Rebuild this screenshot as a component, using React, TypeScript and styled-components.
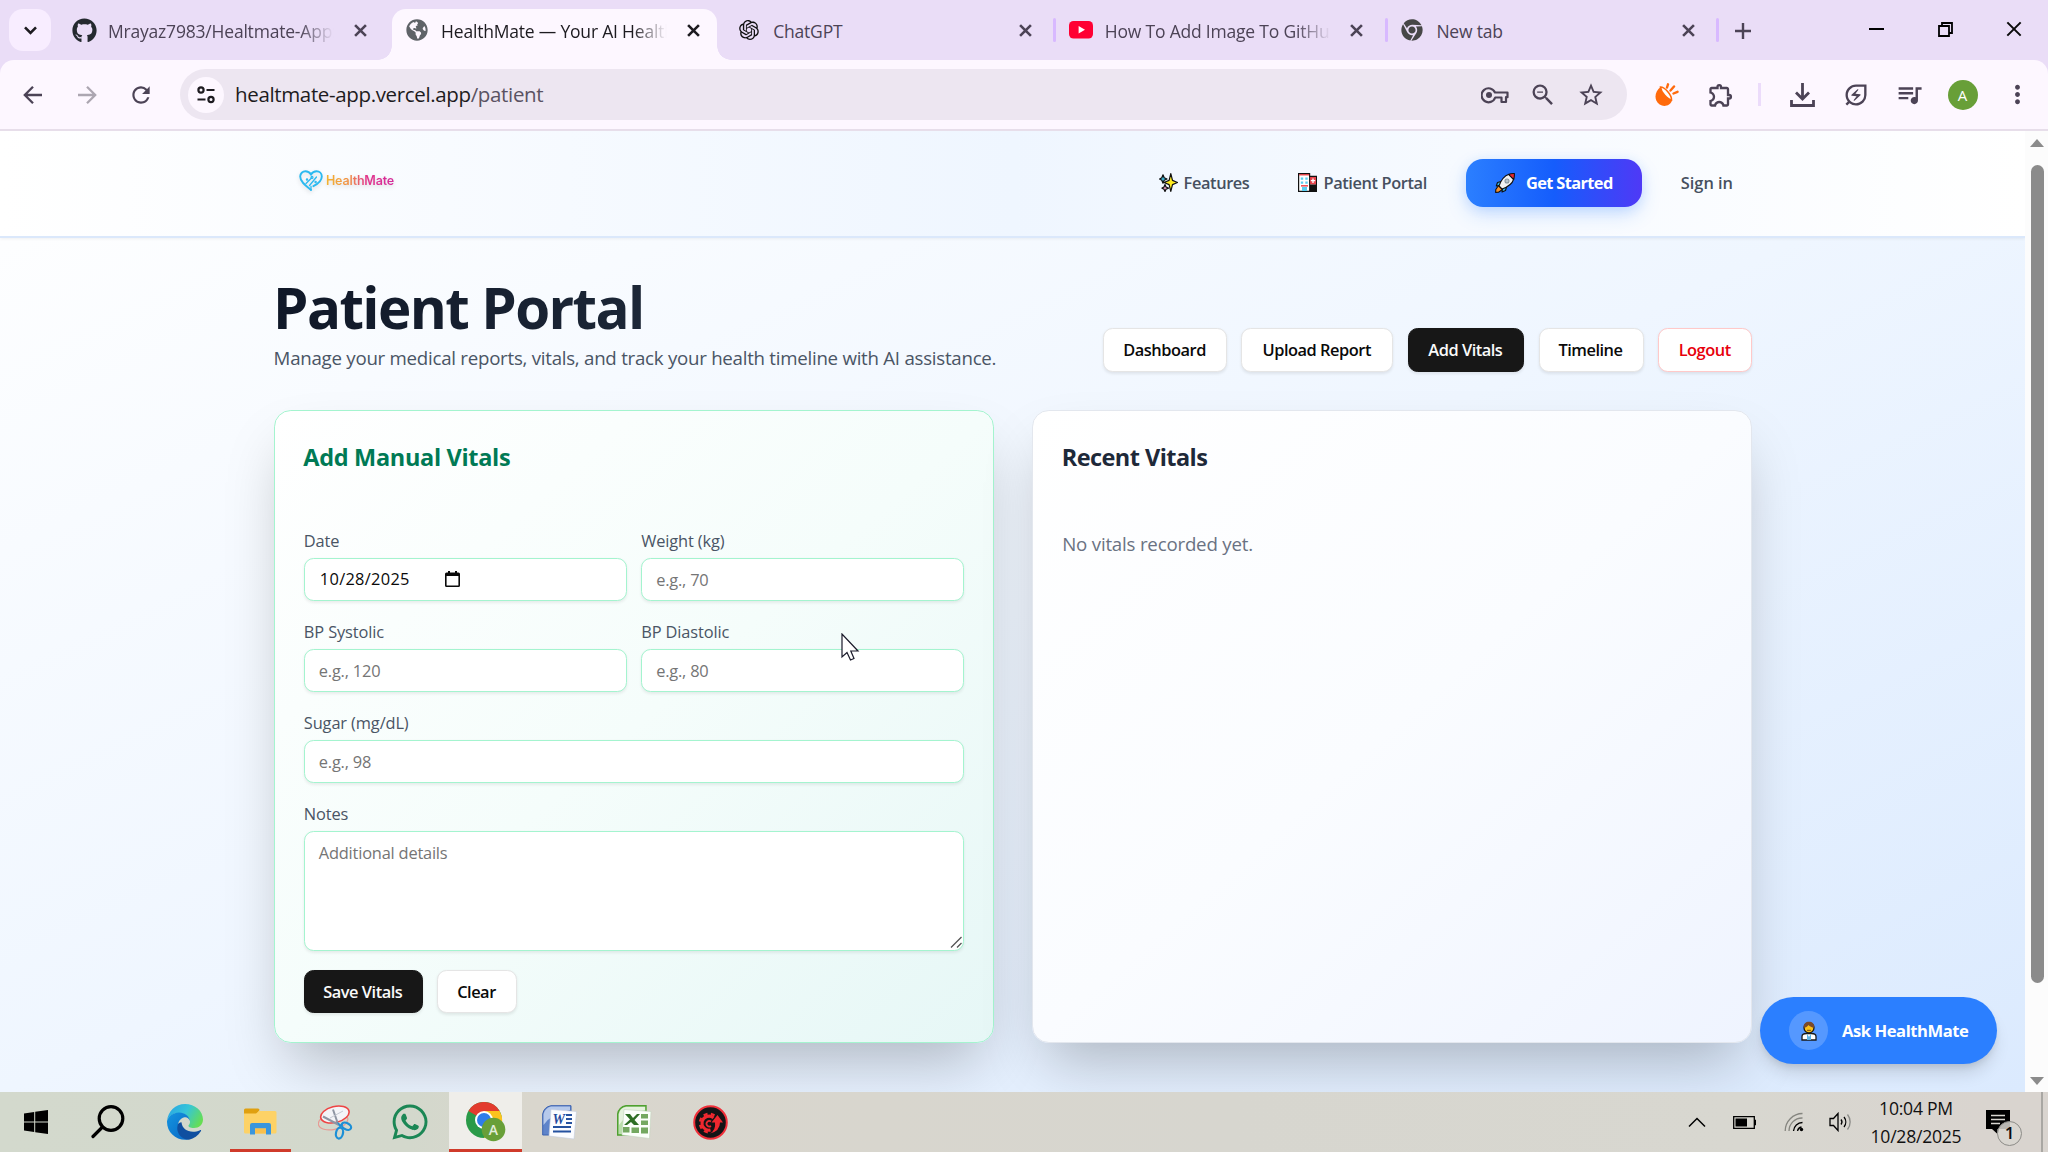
import React from "react";
import styled, { createGlobalStyle, css } from "styled-components";
import { FaGithub, FaWhatsapp, FaChrome, FaGlobeAmericas } from "react-icons/fa";
import { RiOpenaiFill } from "react-icons/ri";
import {
  MdZoomOut,
  MdStarBorder,
  MdOutlineExtension,
  MdQueueMusic,
  MdOutlineEnergySavingsLeaf,
  MdMoreVert,
  MdRefresh,
} from "react-icons/md";

const GlobalStyle = createGlobalStyle`
  *, *::before, *::after { box-sizing: border-box; }
  body {
    margin: 0;
    overflow: hidden;
    font-family: "Open Sans", "Noto Sans", sans-serif;
    color: #0a0a0a;
  }
  svg { display: block; flex: none; }
`;

const Screen = styled.div`
  width: 2048px;
  height: 1152px;
  display: flex;
  flex-direction: column;
  overflow: hidden;
`;

/* ---------- browser chrome ---------- */

const TabStrip = styled.div`
  height: 60px;
  flex: none;
  display: flex;
  background: #eaddf7;
  padding-left: 9px;
`;

const TabSearch = styled.div`
  width: 42px;
  height: 42px;
  margin: 9px 11px 0 0;
  border-radius: 14px;
  background: #f8edff;
  display: grid;
  place-items: center;
`;

const Tab = styled.div<{ $active?: boolean }>`
  position: relative;
  width: ${(p) => (p.$active ? 324.5 : 331.6)}px;
  height: 51px;
  margin: 9px ${(p) => (p.$active ? 10.6 : 0)}px 0 ${(p) => (p.$active ? -1.5 : 0)}px;
  padding-left: ${(p) => (p.$active ? 13 : 10)}px;
  padding-bottom: 9px;
  display: flex;
  align-items: center;
  color: ${(p) => (p.$active ? "#1d1b20" : "#4c4356")};
  ${(p) =>
    p.$active &&
    css`
      background: #fdf7ff;
      border-radius: 14px 14px 0 0;
      &::before,
      &::after {
        content: "";
        position: absolute;
        bottom: 0;
        width: 14px;
        height: 14px;
      }
      &::before {
        left: -14px;
        background: radial-gradient(circle at 0 0, transparent 13.5px, #fdf7ff 14px);
      }
      &::after {
        right: -14px;
        background: radial-gradient(circle at 100% 0, transparent 13.5px, #fdf7ff 14px);
      }
    `}
`;

const TabIcon = styled.span`
  width: 24px;
  margin-right: 12px;
  display: grid;
  place-items: center;
`;

const TabTitle = styled.span<{ $fade?: boolean }>`
  width: 228px;
  overflow: hidden;
  white-space: nowrap;
  font-size: 17.5px;
  line-height: 28px;
  padding-top: 1px;
  letter-spacing: -0.2px;
  ${(p) => p.$fade && "mask-image: linear-gradient(90deg, #000 84%, transparent 99%);"}
`;

const TabClose = styled.span`
  width: 16px;
  margin-left: 17.5px;
`;

const TabDivider = styled.span`
  width: 3px;
  height: 24px;
  border-radius: 2px;
  margin-left: 18.5px;
  background: #d8b9ff;
`;

const NewTab = styled.div`
  width: 44px;
  height: 56px;
  margin: 2px auto 0 -1px;
  padding-top: 2px;
  display: grid;
  place-items: center;
`;

const WindowControl = styled.div`
  width: 68.5px;
  height: 58px;
  display: grid;
  place-items: center;
`;

const ToolbarBack = styled.div`
  flex: none;
  background: #eaddf7;
`;

const Toolbar = styled.div`
  height: 71px;
  background: #fdf7ff;
  border-radius: 14px 14px 0 0;
  border-bottom: 2px solid #e7deea;
  display: flex;
  align-items: center;
  color: #4c4356;
`;

const ToolButton = styled.div<{ $w: number; $color?: string }>`
  width: ${(p) => p.$w}px;
  display: grid;
  place-items: center;
  color: ${(p) => p.$color ?? "inherit"};
`;

const AddressBar = styled.div`
  width: 1447px;
  height: 51px;
  margin: 0 13px 0 6px;
  padding: 0 12px 0 8px;
  border-radius: 26px;
  background: #ede6f1;
  display: flex;
  align-items: center;
`;

const SiteInfo = styled.div`
  width: 36px;
  height: 36px;
  border-radius: 50%;
  background: #fdf7ff;
  display: grid;
  place-items: center;
`;

const Url = styled.div`
  margin: -1px auto 0 11px;
  font-size: 20.5px;
  line-height: 30px;
  letter-spacing: -0.35px;
  color: #1d1b20;
  white-space: nowrap;
  span { color: #5a5262; }
`;

const ToolDivider = styled.span`
  width: 3px;
  height: 23px;
  margin: 0 14px 0 10px;
  background: #ecdcfb;
`;

const Avatar = styled.div`
  width: 30px;
  height: 30px;
  border-radius: 50%;
  background: #689f38;
  color: #fff;
  font-size: 15px;
  line-height: 30px;
  text-align: center;
`;

/* ---------- page ---------- */

const Viewport = styled.div`
  flex: 1;
  min-height: 0;
  display: flex;
`;

const Page = styled.div`
  flex: 1;
  display: flex;
  flex-direction: column;
  position: relative;
  overflow: hidden;
  background: linear-gradient(to bottom right, #ffffff, #eff6ff 50%, #dbeafe);
`;

const Scrollbar = styled.div`
  width: 23px;
  display: flex;
  flex-direction: column;
  align-items: center;
  padding: 8px 0 7px 1px;
  background: #fcfcfc;
`;

const Thumb = styled.div`
  width: 13px;
  height: 818px;
  margin: 18px 0 auto;
  border-radius: 7px;
  background: #8b8b8b;
`;

const Arrow = styled.div<{ $down?: boolean }>`
  border: 7.5px solid transparent;
  border-top-width: ${(p) => (p.$down ? 8 : 0)}px;
  border-bottom-width: ${(p) => (p.$down ? 0 : 8)}px;
  ${(p) => (p.$down ? "border-top-color" : "border-bottom-color")}: #8b8b8b;
`;

const SiteHeader = styled.header`
  height: 107px;
  flex: none;
  border-bottom: 2px solid #dbe8fb;
  background: linear-gradient(90deg, #ffffff, #eff6ff 50%, #ffffff);
  box-shadow: 0 1px 3px rgba(0, 0, 0, 0.06);
  display: flex;
  align-items: center;
  padding: 0 292px 2px 299px;
`;

const Logo = styled.div`
  display: flex;
  align-items: center;
  gap: 3px;
  margin: -4px auto 0 0;
  filter: drop-shadow(0 2px 2px rgba(0, 0, 0, 0.12));
`;

const LogoText = styled.span`
  font-family: Inter, "Open Sans", sans-serif;
  font-weight: 600;
  font-size: 12.5px;
  line-height: 18px;
  letter-spacing: -0.2px;
  background: linear-gradient(90deg, #f3b42f, #f0904a 35%, #e2358c 60%, #d42a9b);
  background-clip: text;
  color: transparent;
`;

const NavLink = styled.a<{ $mr: number; $ls?: number }>`
  display: flex;
  align-items: center;
  gap: 6px;
  margin-right: ${(p) => p.$mr}px;
  font-size: 16.4px;
  line-height: 24px;
  font-weight: 600;
  letter-spacing: ${(p) => p.$ls ?? -0.4}px;
  color: #465060;
  white-space: nowrap;
`;

const GetStarted = styled.button`
  width: 176px;
  height: 48px;
  margin-right: 39px;
  padding: 0;
  border: 0;
  border-radius: 17px;
  display: flex;
  align-items: center;
  justify-content: center;
  gap: 11px;
  font: 700 16.4px/24px "Open Sans", sans-serif;
  letter-spacing: -0.62px;
  color: #fff;
  white-space: nowrap;
  background: linear-gradient(90deg, #2b7fff, #155dfc 50%, #4f39f6);
  box-shadow: 0 8px 20px -2px rgba(43, 127, 255, 0.25), 0 2px 12px rgba(43, 127, 255, 0.12);
`;

const Main = styled.main`
  width: 1478.4px;
  margin-left: 274px;
  padding-top: 39px;
`;

const Heading = styled.div`
  display: flex;
  justify-content: space-between;
  align-items: flex-end;
  height: 95px;
`;

const H1 = styled.h1`
  margin: 0 0 0 -1px;
  font-size: 56.5px;
  line-height: 62px;
  font-weight: 700;
  letter-spacing: -1.6px;
  white-space: nowrap;
  background: linear-gradient(90deg, #101828, #1e2939 60%);
  background-clip: text;
  color: transparent;
`;

const Lead = styled.p`
  margin: 4px 0 0 -0.4px;
  font-size: 18.7px;
  line-height: 29px;
  letter-spacing: -0.26px;
  color: #4a5565;
  white-space: nowrap;
`;

const Actions = styled.div`
  display: flex;
  gap: 14.4px;
`;

type Variant = "light" | "dark" | "danger";

const Button = styled.button<{ $w: number; $variant?: Variant }>`
  width: ${(p) => p.$w}px;
  height: 43.8px;
  padding: 0 1px 0 0;
  border-radius: 9.6px;
  border: 1.2px solid
    ${(p) => (p.$variant === "dark" ? "#171717" : p.$variant === "danger" ? "#ffc9c9" : "#e5e5e5")};
  background: ${(p) => (p.$variant === "dark" ? "#171717" : "#fff")};
  color: ${(p) => (p.$variant === "dark" ? "#fafafa" : p.$variant === "danger" ? "#e7000b" : "#0a0a0a")};
  box-shadow: 0 1.5px 3px rgba(0, 0, 0, 0.08);
  font: 600 16.4px/24px "Open Sans", sans-serif;
  letter-spacing: -0.48px;
  white-space: nowrap;
`;

const Cards = styled.div`
  margin-top: 38px;
  display: grid;
  grid-template-columns: 1fr 1fr;
  gap: 38.4px;
`;

const Card = styled.section<{ $green?: boolean }>`
  height: 633px;
  padding: 31px 28.8px 0;
  border-radius: 16.8px;
  border: 1.2px solid ${(p) => (p.$green ? "#a4f4cf" : "#e3e7ee")};
  background: ${(p) =>
    p.$green
      ? "linear-gradient(to bottom right, #ffffff, #f5fdfb 50%, #e6f7f6)"
      : "linear-gradient(to bottom right, #ffffff, #fafcff 50%, #eff4ff)"};
  box-shadow: 0 30px 60px -14.4px rgba(0, 0, 0, 0.25);
`;

const CardTitle = styled.h2<{ $green?: boolean }>`
  margin: 0 0 0 -0.5px;
  font-size: 23.5px;
  line-height: 30px;
  font-weight: 700;
  letter-spacing: ${(p) => (p.$green ? -0.32 : -0.55)}px;
  color: ${(p) => (p.$green ? "#007a55" : "#1e2939")};
  white-space: nowrap;
`;

const Empty = styled.p`
  margin: 57px 0 0;
  font-size: 18.7px;
  line-height: 29px;
  letter-spacing: -0.2px;
  color: #6a7282;
`;

const Form = styled.div`
  margin-top: 57px;
  display: grid;
  grid-template-columns: 1fr 1fr;
  gap: 19.2px 14.4px;
`;

const Field = styled.label<{ $wide?: boolean }>`
  display: flex;
  flex-direction: column;
  gap: 4.6px;
  font-size: 16.4px;
  line-height: 24px;
  letter-spacing: -0.12px;
  color: #4a5565;
  ${(p) => p.$wide && "grid-column: 1 / -1;"}
`;

const control = css`
  width: 100%;
  border: 1.2px solid #a4f4cf;
  border-radius: 9.6px;
  background: #fff;
  box-shadow: 0 1.5px 3px rgba(0, 0, 0, 0.07);
  font: 400 16.4px/24px "Open Sans", sans-serif;
  letter-spacing: -0.2px;
  color: #0a0a0a;
  outline: none;
  &::placeholder { color: #757575; opacity: 1; }
`;

const Input = styled.input`
  ${control}
  height: 43.2px;
  padding: 1px 14px 0;
`;

const DateBox = styled.div`
  ${control}
  height: 43.2px;
  padding: 0 15px;
  display: flex;
  align-items: center;
  gap: 35px;
  letter-spacing: 0.3px;
`;

const TextAreaWrap = styled.span`
  position: relative;
  display: block;
  height: 120px;
`;

const TextArea = styled.textarea`
  ${control}
  display: block;
  height: 120px;
  padding: 9px 14px;
  resize: none;
`;

const ResizeGrip = styled.svg`
  position: absolute;
  right: 2px;
  bottom: 3px;
`;

const FormActions = styled.div`
  grid-column: 1 / -1;
  display: flex;
  gap: 14.4px;
`;

const AskButton = styled.button`
  position: absolute;
  right: 28px;
  bottom: 28px;
  width: 237px;
  height: 67px;
  padding: 0 0 0 29px;
  border: 0;
  border-radius: 34px;
  background: #2b7fff;
  display: flex;
  align-items: center;
  gap: 14px;
  font: 700 16.6px/24px "Open Sans", sans-serif;
  letter-spacing: -0.45px;
  color: #fff;
  white-space: nowrap;
  box-shadow: 0 12px 18px -4px rgba(0, 0, 0, 0.14), 0 4px 8px -3px rgba(0, 0, 0, 0.12);
`;

const AskBadge = styled.span`
  width: 39px;
  height: 39px;
  border-radius: 50%;
  background: rgba(255, 255, 255, 0.2);
  display: grid;
  place-items: center;
`;

const Cursor = styled.div`
  position: absolute;
  left: 841px;
  top: 633px;
  z-index: 5;
`;

/* ---------- taskbar ---------- */

const Taskbar = styled.div`
  height: 60px;
  flex: none;
  display: flex;
  align-items: center;
  background: linear-gradient(90deg, #d3d9cd 0, #d3d8cc 20%, #d9d6cd 26%, #d7d6cf 60%, #d8d7d0 85%, #d9d4cf 97%);
`;

const TaskItem = styled.div<{ $w: number; $state?: "open" | "active"; $gap?: number }>`
  width: ${(p) => p.$w}px;
  height: 60px;
  margin-left: ${(p) => p.$gap ?? 0}px;
  display: grid;
  place-items: center;
  background: ${(p) => (p.$state === "active" ? "#efeeea" : "transparent")};
  border-bottom: ${(p) => (p.$state ? "3px solid #d03b2b" : "0")};
  padding-top: ${(p) => (p.$state ? "3px" : "0")};
`;

const Tray = styled.div`
  height: 60px;
  margin-left: auto;
  display: flex;
  align-items: center;
`;

const Clock = styled.div`
  width: 112px;
  margin-left: -2.5px;
  text-align: center;
  font-size: 17.6px;
  line-height: 28.5px;
  letter-spacing: -0.25px;
  color: #111;
  white-space: nowrap;
`;

const Notice = styled.div`
  position: relative;
  width: 24px;
  height: 24px;
  margin: -1px 31px 0 14px;
`;

const NoticeCount = styled.span`
  position: absolute;
  left: 11px;
  top: 11px;
  width: 25px;
  height: 25px;
  border: 1.5px solid #8d8c88;
  border-radius: 50%;
  background: rgba(216, 214, 208, 0.85);
  font-size: 17px;
  font-weight: 600;
  line-height: 22px;
  text-align: center;
`;

const ShowDesktop = styled.div`
  width: 7px;
  height: 60px;
  border-left: 2px solid #a9a7a3;
`;

/* ---------- drawings ---------- */

const Cross = ({ s = 13, w = 2.4 }: { s?: number; w?: number }) => (
  <svg width={s} height={s} viewBox="0 0 12 12" stroke="currentColor" strokeWidth={w} fill="none">
    <path d="M1 1 11 11M11 1 1 11" />
  </svg>
);

const ArrowIcon = ({ flip }: { flip?: boolean }) => (
  <svg width="20" height="20" viewBox="0 0 20 20" fill="none" stroke="currentColor" strokeWidth="2.3" transform={flip ? "scale(-1 1)" : undefined}>
    <path d="M19 10H2.5M10 1.8 1.8 10 10 18.2" />
  </svg>
);

const YouTube = () => (
  <svg width="24" height="18" viewBox="0 0 24 18">
    <rect width="24" height="17.5" rx="4.5" fill="#ff0033" />
    <path d="M9.6 5v7.5L16 8.75z" fill="#fff" />
  </svg>
);

const HeartLogo = () => (
  <svg width="24" height="21" viewBox="0 0 24 21" fill="none" stroke="#2bb9f0" strokeWidth="1.9" strokeLinecap="round">
    <path d="M12 20C7 16 1.2 12 1.2 6.6 1.2 3.4 3.6 1.3 6.4 1.3 9 1.3 11 2.8 12 4.4 13 2.8 15 1.3 17.6 1.3c2.8 0 5.2 2.1 5.2 5.3 0 4.3-4 7.4-8.4 9.6" />
    <path d="M7 13.5 12.5 8M10.5 15.5 17.5 7M12 20v-3.5" strokeWidth="1.3" />
    <circle cx="13" cy="7.4" r="1" strokeWidth="1.1" />
    <circle cx="8" cy="9.6" r=".7" strokeWidth="1.1" />
    <circle cx="16.6" cy="12" r=".7" strokeWidth="1.1" />
  </svg>
);

const Sparkles = () => (
  <svg width="19" height="19" viewBox="0 0 19 19" stroke="#111" strokeWidth="1.2" strokeLinejoin="round">
    <path d="M4 1.8 5.2 4.8 8 6 5.2 7.2 4 10.2 2.8 7.2.6 6l2.2-1.2z" fill="#3fb8d8" />
    <path d="M6 11.5 7 14l2.5 1.1L7 16.2 6 18.5 5 16.2 3 15.1 5 14z" fill="#f0a0c8" />
    <path d="M11.8.6 13.5 7.4 18.5 9.5 13.5 11.6 11.8 18.4 10.1 11.6 5 9.5 10.1 7.4z" fill="#ffec1f" />
  </svg>
);

const Hospital = () => (
  <svg width="19" height="19" viewBox="0 0 19 19">
    <path d="M.6.6h11v2.8h6.8v15H.6z" fill="#fff" stroke="#111" strokeWidth="1.2" />
    <path d="M1.2 1.2h10v1.2h-10z" fill="#e8262d" />
    <path d="M12 4h6v7.5h-6z" fill="#e8434c" />
    <path d="M12 11.5h6V18h-6z" fill="#111" />
    <path d="M15 5.5v4.5M12.8 7.7h4.4" stroke="#fff" strokeWidth="1.3" />
    <path d="M2.8 4.5h2.4v2.2H2.8zM7.3 4.5h2.4v2.2H7.3zM2.8 8.5h2.4v2.2H2.8zM7.3 8.5h2.4v2.2H7.3zM4 14h5v4H4z" fill="#58cdf0" />
    <path d="M3 12.2h7v1.3H3z" fill="#e8262d" />
    <path d="M11.6 3v15" stroke="#111" />
  </svg>
);

const Rocket = () => (
  <svg width="20" height="20" viewBox="0 0 20 20" stroke="#111" strokeWidth="1.1" strokeLinejoin="round">
    <path d="M6 8.500 2.500 9.500 1.300 13 5 12.500zM11.500 14l-1 3.500L7 19l.5-4z" fill="#35b6e8" />
    <path d="M3.500 12.500.8 16.500.6 19.400 3.500 19.200 7.500 16.500z" fill="#f7922c" />
    <path d="M4 13C6 7 10 2.500 14 1.200L18.800 6C17.500 10 13 14 7 16z" fill="#f2f2f2" />
    <path d="M13.500 1.400C15.500.6 17.500.5 19.400.6 19.500 2.500 19.400 4.500 18.600 6.500z" fill="#e8262d" />
    <circle cx="12" cy="8" r="2" fill="#b8c4cc" stroke="#8a979f" />
  </svg>
);

const Doctor = () => (
  <svg width="16" height="20" viewBox="0 0 16 20" stroke="#1a1a1a" strokeWidth="1.3">
    <path d="M1 19v-3.500C1 13.500 3 12.500 5.500 12.500h5c2.500 0 4.500 1 4.500 3V19z" fill="#fff" />
    <path d="M6 12.500 8 16l2-3.500V19H6z" fill="#5fb4e6" stroke="none" />
    <circle cx="8" cy="6.800" r="5" fill="#fcc21b" />
    <path d="M2.800 6.800C2.300 2.500 5 .7 8 .7s5.700 1.800 5.200 6.100C11 6.500 8.500 5.500 7.500 4 6.500 5.500 4.500 6.600 2.800 6.800z" fill="#7b4a2a" stroke="none" />
    <path d="M6 9.300h4" stroke="#7a4a1c" strokeWidth="1" />
  </svg>
);

const Edge = () => (
  <svg width="36" height="36" viewBox="0 0 36 36">
    <defs>
      <linearGradient id="edgeTop" x1="0" x2="1" y1=".2" y2=".6">
        <stop offset="0" stopColor="#2aa6e4" />
        <stop offset=".5" stopColor="#36c5d8" />
        <stop offset="1" stopColor="#66de53" />
      </linearGradient>
      <linearGradient id="edgeLow" x1="0" x2="1" y1="0" y2="1">
        <stop offset="0" stopColor="#1595e0" />
        <stop offset="1" stopColor="#0766c4" />
      </linearGradient>
    </defs>
    <path d="M0 17C1 7 8.500 0 18 0c10 0 18 7 18 15.500 0 5-4 8.500-9 8.500-4 0-6-1.500-5.500-2.500 1-1.200 1.500-2.200 1.500-3.700C23 13 18 9 12 9 6 9 1.500 12.500 0 17z" fill="url(#edgeTop)" />
    <path d="M0 17C1.500 12.500 6 8.500 12 8.500c6 0 10.500 4 11 8.500-1-3-3.500-4.200-5.500-3.700C13 14.500 11 18 11 22c0 7 5.500 12.500 11 13.500C10 37.500 0 29 0 18z" fill="url(#edgeLow)" />
    <path d="M11 20c-3 9 4 15.500 11 15.700 5-.9 9-4 12-8.700.5-1-.5-1.200-1-.8-9 4-18-.2-18.500-8C12.500 18.500 11.500 19 11 20z" fill="#0f4fa0" />
  </svg>
);

const Folder = () => (
  <svg width="33" height="28" viewBox="0 0 33 28">
    <path d="M0 2Q0 .5 1.500.5H14q1.500 0 1.500 1.500L13 6H0z" fill="#e0a010" />
    <path d="M0 5.500h12l3-2.500H31q1.500 0 1.500 1.500V24q0 1.500-1.500 1.500H1.500Q0 25.500 0 24z" fill="#fdd266" />
    <path d="M6 26.500V17q0-2 2-2h17q2 0 2 2v9.500h-5V20.500H11v6z" fill="#3a96dd" />
    <path d="M11 20.500h11v5H11z" fill="#f9c04c" />
  </svg>
);

const Snip = () => (
  <svg width="35" height="35" viewBox="0 0 35 35" fill="none">
    <ellipse cx="15" cy="16.500" rx="15" ry="8" transform="rotate(-12 15 16)" stroke="#e79a94" strokeWidth="1.200" />
    <ellipse cx="17" cy="9.500" rx="14.500" ry="8" transform="rotate(-14 17 10)" fill="#f4f4f8" stroke="#ee4444" strokeWidth="1.600" />
    <path d="M15 4.500 20 19M5 11.500 21 20" stroke="#8f95a3" strokeWidth="2" />
    <path d="M12 13 25 6" stroke="#c4c8d2" />
    <ellipse cx="28.500" cy="21" rx="5" ry="3.200" transform="rotate(28 28 21)" stroke="#1c8fd6" strokeWidth="2.200" />
    <ellipse cx="21.500" cy="28" rx="3.500" ry="5.500" transform="rotate(12 21 28)" stroke="#1c8fd6" strokeWidth="2.200" />
    <path d="m19 17 5 3-2 3z" fill="#1c8fd6" />
  </svg>
);

const ChromeColor = () => (
  <svg width="40" height="40" viewBox="0 0 40 40">
    <circle cx="18" cy="18" r="18" fill="#2a9a48" />
    <path d="M18 18 2.400 9A18 18 0 0 1 33.600 9z" fill="#e33b2e" />
    <path d="M18 9h15.600A18 18 0 0 1 18 36l7.800-13.500z" fill="#fcc31e" />
    <circle cx="18" cy="18" r="9" fill="#fff" />
    <circle cx="18" cy="18" r="7" fill="#2f7de9" />
    <circle cx="27.500" cy="27.500" r="11.800" fill="#689f38" />
    <text x="27.500" y="32.500" textAnchor="middle" fontFamily="Open Sans" fontWeight="600" fontSize="14" fill="#e2edda">A</text>
  </svg>
);

const Word = () => (
  <svg width="35" height="35" viewBox="0 0 35 35">
    <path d="M.7 30V9Q2 2 9 .7h20V30z" fill="#5f84ca" stroke="#3c62b0" />
    <path d="M1.500 20Q10 8 28 5V1.500H9Q3 3 1.500 9z" fill="#d3e0f6" opacity=".75" />
    <path d="m9 4.500 25.500 2L32 34 7 31z" fill="#fbfcff" stroke="#c3cbdc" strokeWidth=".6" />
    <text x="10.500" y="18.500" fontFamily="Liberation Serif" fontStyle="italic" fontWeight="700" fontSize="14" fill="#1f4a9e">W</text>
    <path d="M24 10h6M24 14h6M24 18h6M11 22h18M11 26.500h18" stroke="#24519f" strokeWidth="2" />
  </svg>
);

const Excel = () => (
  <svg width="35" height="35" viewBox="0 0 35 35">
    <path d="M.7 30V9Q2 2 9 .7h20V30z" fill="#b9deaa" stroke="#4fa030" strokeWidth="1.400" />
    <path d="M2 20Q10 8 28 5V2H9Q3 3 2 9z" fill="#ecf6e6" opacity=".85" />
    <path d="m7 4.500 27 2L32.500 33.500 5 30z" fill="#fbfffa" stroke="#c3d3bd" strokeWidth=".6" />
    <path d="M24 9h7v4.500h-7zM24 15.500h7V20h-7zM6 22h6.500v5.500H6zM14.500 22.500H22v5.500h-7.500zM24 22.500h7v6h-7z" fill="#74a860" />
    <path d="m8 9 5 0 3 4 4-4h3l-5.500 6 4.500 5h-5l-3-3-4 3H7l6-5.500z" fill="#2d6e24" />
  </svg>
);

const Gear = () => (
  <svg width="35" height="35" viewBox="0 0 35 35" fill="none">
    <circle cx="17.500" cy="17.500" r="16.300" fill="#141416" stroke="#f0303a" strokeWidth="2" />
    <path d="M20.500 12.800A7 7 0 1 0 17.500 25" stroke="#f0282f" strokeWidth="3" />
    <path d="M21.500 10.500A9.300 9.300 0 1 0 17.500 27.300" stroke="#f0282f" strokeWidth="2.200" strokeDasharray="4 3.300" />
    <path d="M18 16.500a2.800 2.800 0 1 0 0 4.500" stroke="#f0282f" strokeWidth="1.700" />
    <path d="M17 28.500Q23 25 22 17.500h-3.500l6-7.500 5.500 7.500h-3q0 8.500-10 11z" fill="#f0282f" />
  </svg>
);

const Key = () => (
  <svg width="28" height="20" viewBox="0 0 28 20" fill="none" stroke="currentColor" strokeWidth="2.200">
    <path d="M14 7.500h12.500v4.700H25V17h-4.500v-4.500H14.200A7 7 0 1 1 14 7.500z" strokeLinejoin="round" />
    <circle cx="8" cy="10" r="3" fill="currentColor" stroke="none" />
  </svg>
);

const Carrot = () => (
  <svg width="24" height="24" viewBox="0 0 24 24">
    <path d="M5.500 4C1.500 7-.8 12.500 1.300 17.500 3.500 22.500 9.500 24.500 14 21.500 16 20 17.200 18 17 16z" fill="#ff6a0c" />
    <path d="M5.500 4C9.500 4 16.800 11.500 16.500 17 12.500 16.500 6 9.500 5.500 4z" fill="#fff" stroke="#ff6a0c" strokeWidth="1.600" />
    <path d="M12 4.500 13 1.300M15.500 7.500 19 3.500M18.500 10.500 22.500 8.800" stroke="#ff6a0c" strokeWidth="2.400" strokeLinecap="round" />
  </svg>
);

const CalendarGlyph = () => (
  <svg width="15" height="16" viewBox="0 0 15 16">
    <path d="M3 0h2v1.500h5V0h2v1.500h1.500Q15 1.500 15 3v11.500q0 1.500-1.500 1.500h-12Q0 16 0 14.500V3q0-1.500 1.500-1.500H3zM1.600 5v9.400h11.800V5z" fill="#0a0a0a" fillRule="evenodd" />
  </svg>
);

/* ---------- data ---------- */

const tabs = [
  { title: "Mrayaz7983/Healtmate-App:", icon: <FaGithub size={25} color="#24292f" />, fade: true },
  { title: "HealthMate — Your AI Health", icon: <FaGlobeAmericas size={22} color="#5f6368" />, active: true, fade: true },
  { title: "ChatGPT", icon: <RiOpenaiFill size={24} color="#111" />, divider: true },
  { title: "How To Add Image To GitHub", icon: <YouTube />, divider: true, fade: true },
  { title: "New tab", icon: <FaChrome size={22} color="#474747" />, divider: true },
];

const actions: { label: string; w: number; variant?: Variant }[] = [
  { label: "Dashboard", w: 123.5 },
  { label: "Upload Report", w: 152 },
  { label: "Add Vitals", w: 116.5, variant: "dark" },
  { label: "Timeline", w: 105 },
  { label: "Logout", w: 94.5, variant: "danger" },
];

export default function App() {
  return (
    <Screen>
      <GlobalStyle />
      <TabStrip>
        <TabSearch>
          <svg width="13" height="9" viewBox="0 0 13 9" fill="none" stroke="#1d1b20" strokeWidth="2.6">
            <path d="m1 1.300 5.500 5.500L12 1.300" />
          </svg>
        </TabSearch>
        {tabs.map((t) => (
          <Tab key={t.title} $active={t.active}>
            <TabIcon>{t.icon}</TabIcon>
            <TabTitle $fade={t.fade}>{t.title}</TabTitle>
            <TabClose>
              <Cross />
            </TabClose>
            {t.divider && <TabDivider />}
          </Tab>
        ))}
        <NewTab>
          <svg width="16" height="16" viewBox="0 0 16 16" stroke="#4c4356" strokeWidth="2.4">
            <path d="M8 0v16M0 8h16" />
          </svg>
        </NewTab>
        <WindowControl>
          <svg width="15" height="2"><rect width="15" height="2" /></svg>
        </WindowControl>
        <WindowControl>
          <svg width="15" height="15" viewBox="0 0 15 15" fill="none" stroke="#000" strokeWidth="1.8">
            <path d="M1 4h10v10H1zM4 4V1h10v10h-3" />
          </svg>
        </WindowControl>
        <WindowControl>
          <Cross s={16} w={1.5} />
        </WindowControl>
      </TabStrip>

      <ToolbarBack>
        <Toolbar>
          <ToolButton $w={66}><ArrowIcon /></ToolButton>
          <ToolButton $w={42} $color="#aca6b1"><ArrowIcon flip /></ToolButton>
          <ToolButton $w={66}><MdRefresh size={26} /></ToolButton>
          <AddressBar>
            <SiteInfo>
              <svg width="18" height="18" viewBox="0 0 18 18" fill="none" stroke="#1d1b20" strokeWidth="2.2">
                <circle cx="4" cy="4" r="2.6" />
                <path d="M9.500 4H17.500M.5 13.500h8" />
                <circle cx="14" cy="13.5" r="2.6" />
              </svg>
            </SiteInfo>
            <Url>healtmate-app.vercel.app<span>/patient</span></Url>
            <ToolButton $w={48}><Key /></ToolButton>
            <ToolButton $w={48}><MdZoomOut size={28} /></ToolButton>
            <ToolButton $w={48}><MdStarBorder size={28} /></ToolButton>
          </AddressBar>
          <ToolButton $w={54}><Carrot /></ToolButton>
          <ToolButton $w={54}><MdOutlineExtension size={28} /></ToolButton>
          <ToolDivider />
          <ToolButton $w={54}>
            <svg width="25" height="24" viewBox="0 0 25 24" fill="none" stroke="currentColor" strokeWidth="2.8">
              <path d="M12.500 0v15M6 9.500l6.500 6.500L19 9.500M1.500 17v5.500h22V17" />
            </svg>
          </ToolButton>
          <ToolButton $w={53}><MdOutlineEnergySavingsLeaf size={28} /></ToolButton>
          <ToolButton $w={54}><MdQueueMusic size={29} /></ToolButton>
          <ToolButton $w={53}><Avatar>A</Avatar></ToolButton>
          <ToolButton $w={56}><MdMoreVert size={29} /></ToolButton>
        </Toolbar>
      </ToolbarBack>

      <Viewport>
        <Page>
          <SiteHeader>
            <Logo>
              <HeartLogo />
              <LogoText>HealthMate</LogoText>
            </Logo>
            <NavLink $mr={49}><Sparkles />Features</NavLink>
            <NavLink $mr={39}><Hospital />Patient Portal</NavLink>
            <GetStarted><Rocket />Get Started</GetStarted>
            <NavLink $mr={0} $ls={-0.02}>Sign in</NavLink>
          </SiteHeader>

          <Main>
            <Heading>
              <div>
                <H1>Patient Portal</H1>
                <Lead>Manage your medical reports, vitals, and track your health timeline with AI assistance.</Lead>
              </div>
              <Actions>
                {actions.map((a) => (
                  <Button key={a.label} $w={a.w} $variant={a.variant}>{a.label}</Button>
                ))}
              </Actions>
            </Heading>

            <Cards>
              <Card $green>
                <CardTitle $green>Add Manual Vitals</CardTitle>
                <Form>
                  <Field>
                    Date
                    <DateBox>10/28/2025<CalendarGlyph /></DateBox>
                  </Field>
                  <Field>Weight (kg)<Input placeholder="e.g., 70" /></Field>
                  <Field>BP Systolic<Input placeholder="e.g., 120" /></Field>
                  <Field>BP Diastolic<Input placeholder="e.g., 80" /></Field>
                  <Field $wide>Sugar (mg/dL)<Input placeholder="e.g., 98" /></Field>
                  <Field $wide>
                    Notes
                    <TextAreaWrap>
                      <TextArea placeholder="Additional details" />
                      <ResizeGrip width="12" height="12" viewBox="0 0 12 12" stroke="#555" strokeWidth="1.3">
                        <path d="M1 11.500 11.500 1M7 11.500 11.500 7" />
                      </ResizeGrip>
                    </TextAreaWrap>
                  </Field>
                  <FormActions>
                    <Button $w={119} $variant="dark">Save Vitals</Button>
                    <Button $w={79.5}>Clear</Button>
                  </FormActions>
                </Form>
              </Card>
              <Card>
                <CardTitle>Recent Vitals</CardTitle>
                <Empty>No vitals recorded yet.</Empty>
              </Card>
            </Cards>
          </Main>

          <AskButton>
            <AskBadge><Doctor /></AskBadge>
            Ask HealthMate
          </AskButton>
        </Page>
        <Scrollbar>
          <Arrow />
          <Thumb />
          <Arrow $down />
        </Scrollbar>
      </Viewport>

      <Taskbar>
        <TaskItem $w={72}>
          <svg width="24" height="24" viewBox="0 0 24 24">
            <path d="M0 3.400 10.200 2v9.500H0zM11.200 1.800 24 0v11.500H11.200zM0 12.500h10.200V22L0 20.600zM11.200 12.500H24V24l-12.800-1.800z" />
          </svg>
        </TaskItem>
        <TaskItem $w={72}>
          <svg width="34" height="34" viewBox="0 0 34 34" fill="none" stroke="#000" strokeWidth="3.2" strokeLinecap="round">
            <circle cx="20" cy="13.5" r="11.8" />
            <path d="M11.500 22 2 31.500" />
          </svg>
        </TaskItem>
        <TaskItem $w={82}><Edge /></TaskItem>
        <TaskItem $w={61} $gap={4} $state="open"><Folder /></TaskItem>
        <TaskItem $w={88}><Snip /></TaskItem>
        <TaskItem $w={62}><FaWhatsapp size={40} color="#1b8755" /></TaskItem>
        <TaskItem $w={73} $gap={8} $state="active"><ChromeColor /></TaskItem>
        <TaskItem $w={75}><Word /></TaskItem>
        <TaskItem $w={75}><Excel /></TaskItem>
        <TaskItem $w={76}><Gear /></TaskItem>
        <Tray>
          <TaskItem $w={48}>
            <svg width="18" height="11" viewBox="0 0 18 11" fill="none" stroke="#000" strokeWidth="1.5"><path d="m1 9.500 8-8 8 8" /></svg>
          </TaskItem>
          <TaskItem $w={48}>
            <svg width="23" height="13" viewBox="0 0 23 13"><path d="M.7.7h20.600v11.600H.7zM21.500 4.500h1v4h-1" fill="none" stroke="#000" strokeWidth="1.3" /><path d="M2.500 2.500h11.500v8H2.500z" /></svg>
          </TaskItem>
          <TaskItem $w={50}>
            <svg width="20" height="20" viewBox="0 0 20 20" fill="none" stroke="#000" strokeWidth="1.3">
              <path d="M1.200 19A17.500 17.500 0 0 1 18.500 1.500M5 19A13 13 0 0 1 18.500 6" stroke="#85857f" />
              <path d="M9.500 19A9 9 0 0 1 18.500 10.500M13.500 19a5 5 0 0 1 4-4" />
              <circle cx="17.5" cy="17.5" r="1.7" fill="#000" stroke="none" />
            </svg>
          </TaskItem>
          <TaskItem $w={44}>
            <svg width="23" height="20" viewBox="0 0 23 20" fill="none" stroke="#000" strokeWidth="1.3">
              <path d="M1 6.500h3.500L9 1.500v17l-4.500-5H1z" />
              <path d="M12 7.500a4 4 0 0 1 0 5M15 5a8 8 0 0 1 0 10" />
              <path d="M18.500 2.500a12 12 0 0 1 0 15" stroke="#8a8a86" />
            </svg>
          </TaskItem>
          <Clock>
            <div>10:04 PM</div>
            <div>10/28/2025</div>
          </Clock>
          <Notice>
            <svg width="24" height="24" viewBox="0 0 24 24">
              <path d="M0 0h24v19H11.500v5L6 19H0z" />
              <path d="M5 5.500h14M5 9.500h14M5 13.500h9" stroke="#d8d6d0" strokeWidth="1.4" />
            </svg>
            <NoticeCount>1</NoticeCount>
          </Notice>
          <ShowDesktop />
        </Tray>
      </Taskbar>
      <Cursor>
        <svg width="19" height="28" viewBox="0 0 19 28">
          <path d="M1 1v23l5-4.500 3.500 7.500 3.500-1.500L9.800 18H17z" fill="#fff" stroke="#1a1a2a" strokeWidth="1.2" />
        </svg>
      </Cursor>
    </Screen>
  );
}
